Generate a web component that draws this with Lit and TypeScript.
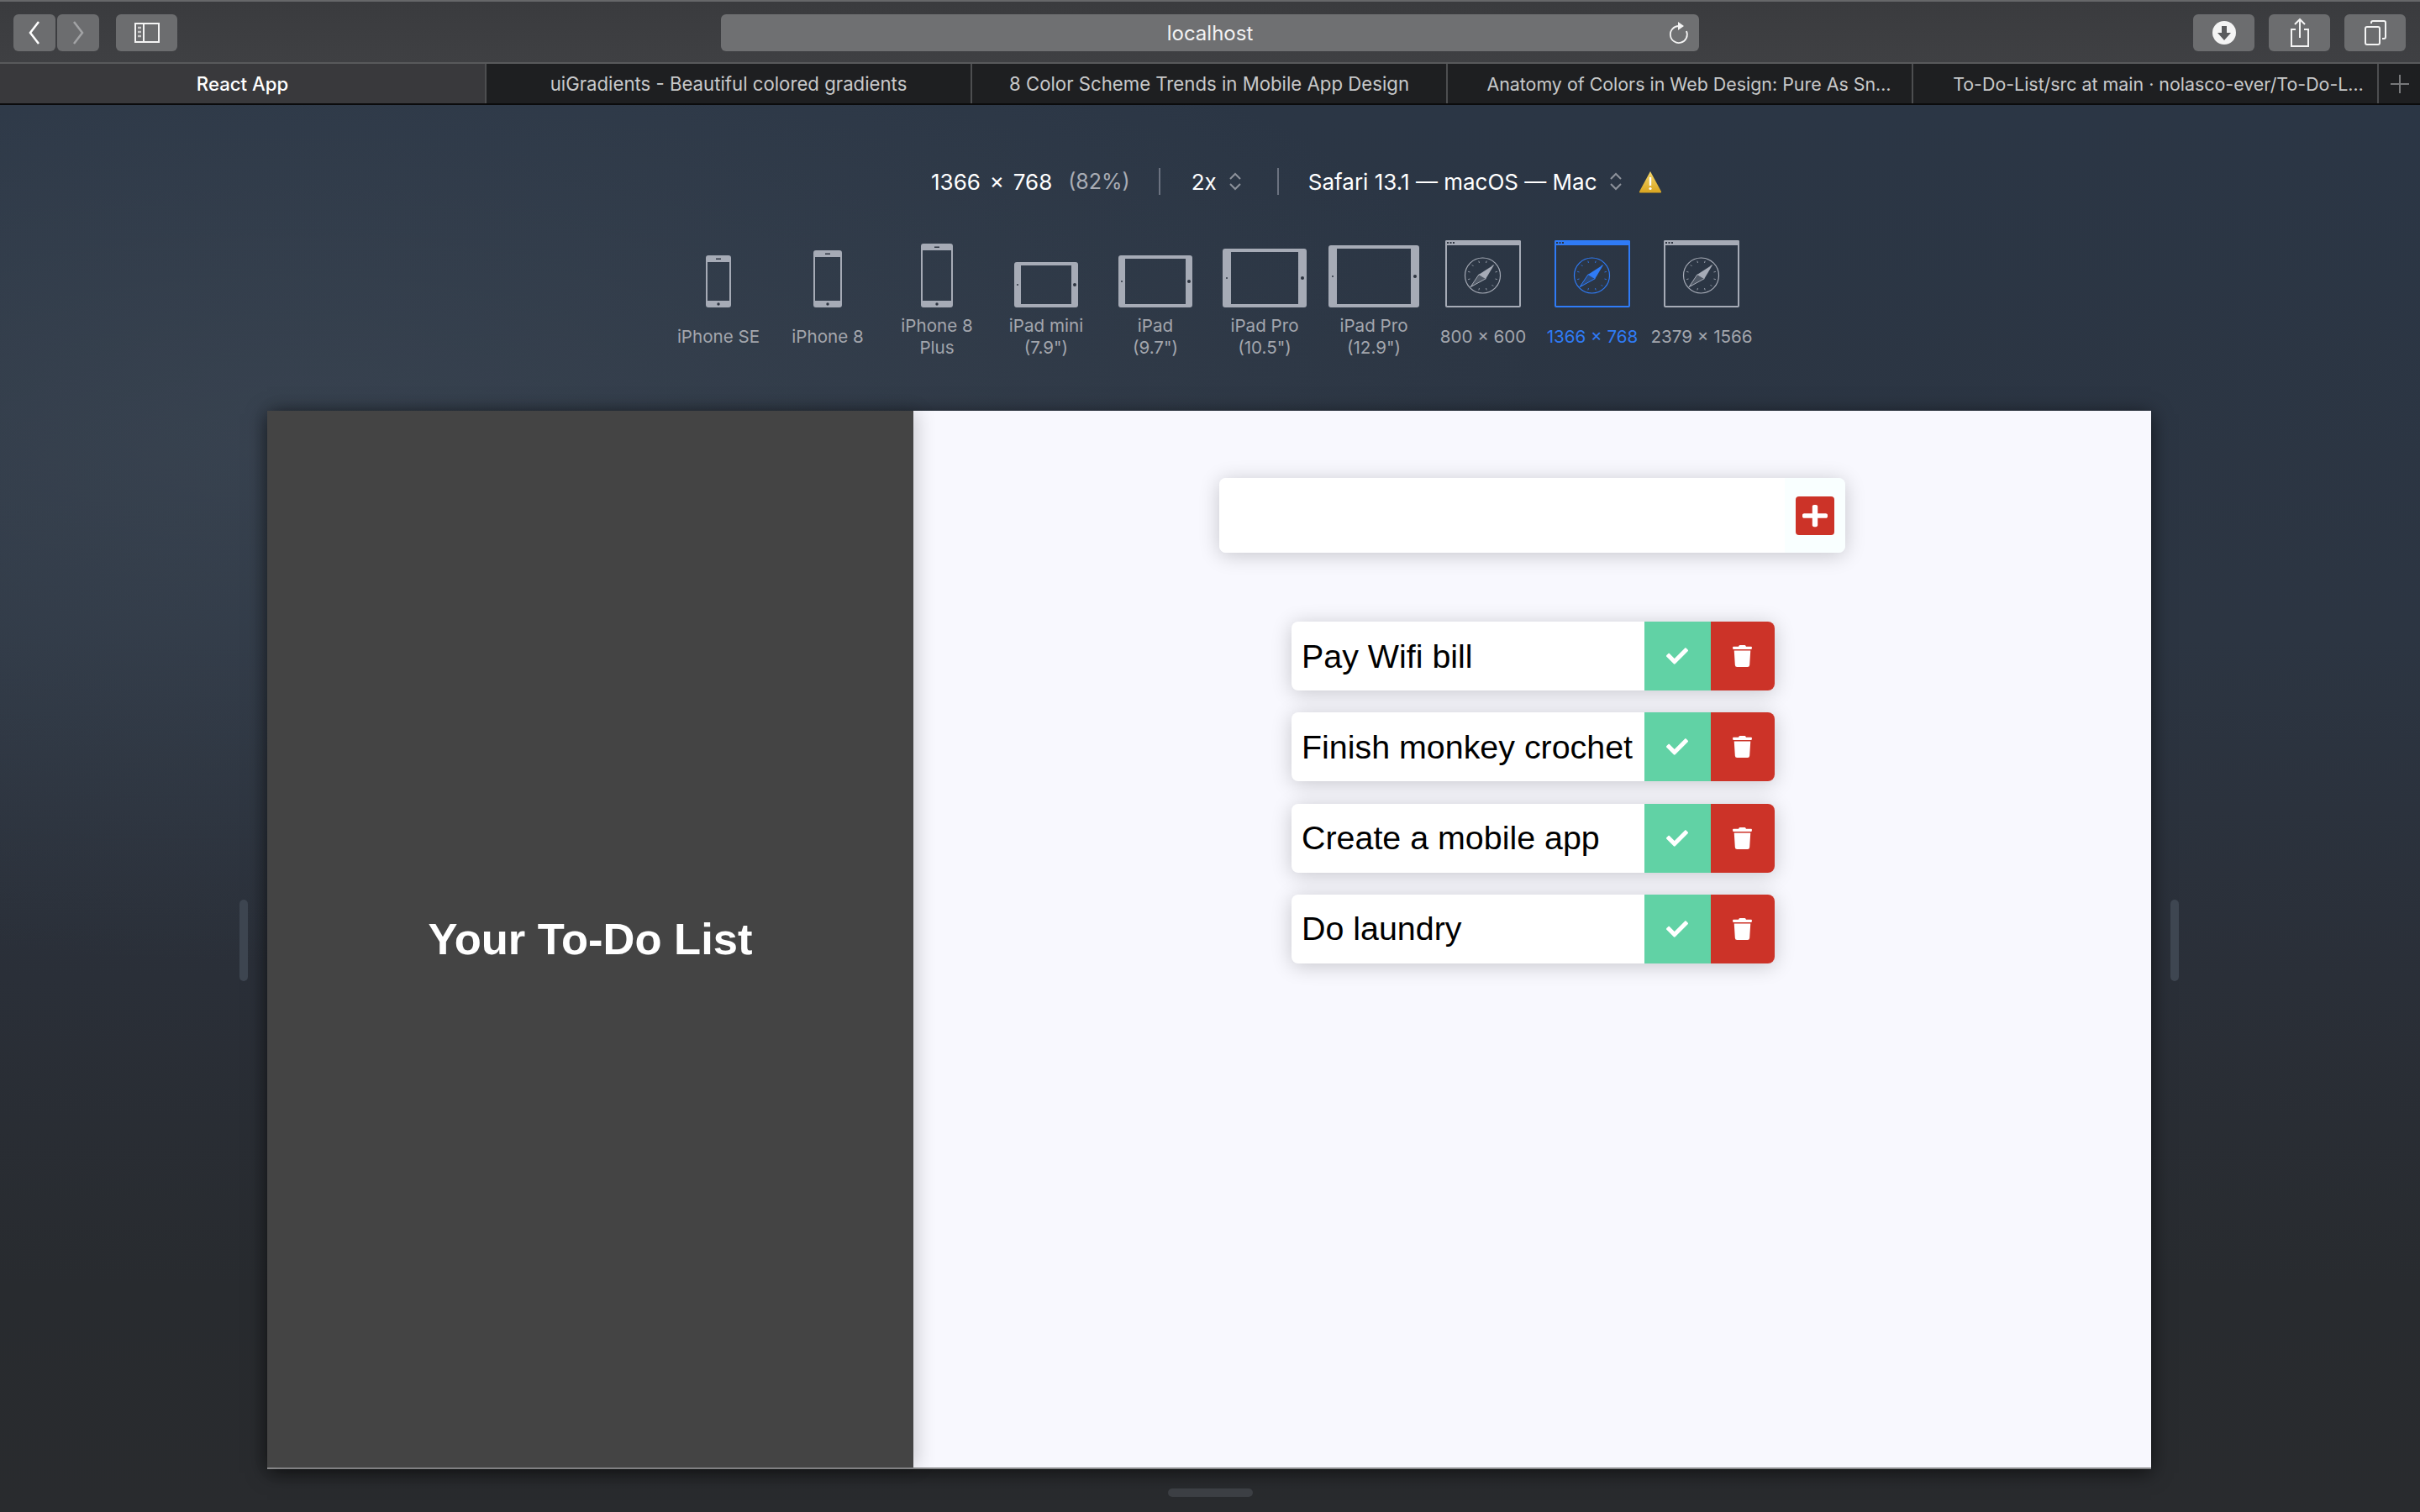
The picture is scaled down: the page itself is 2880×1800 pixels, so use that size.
import { LitElement, html, css, svg } from 'lit';
import { customElement } from 'lit/decorators.js';
import { classMap } from 'lit/directives/class-map.js';

const TABS = [
  { title: 'React App', active: true },
  { title: 'uiGradients - Beautiful colored gradients' },
  { title: '8 Color Scheme Trends in Mobile App Design' },
  { title: 'Anatomy of Colors in Web Design: Pure As Sn…', narrow: true, nudge: true },
  { title: 'To-Do-List/src at main · nolasco-ever/To-Do-L…', narrow: true, nudgeMore: true },
];

type Device = { kind: string; w: number; h: number; lines: string[]; active?: boolean; bx?: number };

const DEVICES: Device[] = [
  { kind: 'phone', w: 30, h: 62, lines: ['iPhone SE'] },
  { kind: 'phone', w: 34, h: 68, lines: ['iPhone 8'] },
  { kind: 'phone', w: 38, h: 76, lines: ['iPhone 8', 'Plus'] },
  { kind: 'tablet', w: 76, h: 54, bx: 8, lines: ['iPad mini', '(7.9")'] },
  { kind: 'tablet', w: 88, h: 62, bx: 8, lines: ['iPad', '(9.7")'] },
  { kind: 'tablet', w: 100, h: 70, bx: 10, lines: ['iPad Pro', '(10.5")'] },
  { kind: 'tablet', w: 108, h: 74, bx: 10, lines: ['iPad Pro', '(12.9")'] },
  { kind: 'window', w: 90, h: 80, lines: ['800 × 600'] },
  { kind: 'window', w: 90, h: 80, lines: ['1366 × 768'], active: true },
  { kind: 'window', w: 90, h: 80, lines: ['2379 × 1566'] },
];

const TODOS = ['Pay Wifi bill', 'Finish monkey crochet', 'Create a mobile app', 'Do laundry'];

const CHECK =
  'M173.898 439.404l-166.4-166.4c-9.997-9.997-9.997-26.206 0-36.204l36.203-36.204c9.997-9.998 26.207-9.998 36.204 0L192 312.69 432.095 72.596c9.997-9.997 26.207-9.997 36.204 0l36.203 36.204c9.997 9.997 9.997 26.206 0 36.204l-294.4 294.401c-9.998 9.997-26.207 9.997-36.204-.001z';
const TRASH =
  'M432 32H312l-9.4-18.7A24 24 0 0 0 281.1 0H166.8a23.72 23.72 0 0 0-21.4 13.3L136 32H16A16 16 0 0 0 0 48v32a16 16 0 0 0 16 16h416a16 16 0 0 0 16-16V48a16 16 0 0 0-16-16zM53.2 467a48 48 0 0 0 47.9 45h245.8a48 48 0 0 0 47.9-45L416 128H32z';
const PLUS =
  'M416 208H272V64c0-17.67-14.33-32-32-32h-32c-17.67 0-32 14.33-32 32v144H32c-17.67 0-32 14.33-32 32v32c0 17.67 14.33 32 32 32h144v144c0 17.67 14.33 32 32 32h32c17.67 0 32-14.33 32-32V304h144c17.67 0 32-14.33 32-32v-32c0-17.67-14.33-32-32-32z';

const DOT = '#2d3440';

// device frame with the screen cut out, so the page background shows through
function frame(w: number, h: number, x: number, y: number) {
  return `M3 0H${w - 3}Q${w} 0 ${w} 3V${h - 3}Q${w} ${h} ${w - 3} ${h}H3Q0 ${h} 0 ${h - 3}V3Q0 0 3 0Z` +
    `M${x} ${y}V${h - y}H${w - x}V${y}Z`;
}

function phoneIcon(d: Device) {
  const { w, h } = d;
  return svg`
    <path d=${frame(w, h, 2, 8)} fill="currentColor" fill-rule="evenodd"></path>
    <rect x=${w / 2 - 3} y="3.5" width="6" height="1.5" fill=${DOT}></rect>
    <circle cx=${w / 2} cy=${h - 4} r="1.7" fill=${DOT}></circle>`;
}

function tabletIcon(d: Device) {
  const { w, h } = d;
  const bx = d.bx ?? 8;
  return svg`
    <path d=${frame(w, h, bx, 4)} fill="currentColor" fill-rule="evenodd"></path>
    <circle cx=${bx / 2} cy=${h / 2} r="1" fill=${DOT}></circle>
    <circle cx=${w - bx / 2} cy=${h / 2} r="2" fill=${DOT}></circle>`;
}

function windowIcon() {
  const ticks = Array.from({ length: 12 }, (_, i) => {
    const a = (i * Math.PI) / 6 + Math.PI / 12;
    return svg`<line x1=${44.5 + Math.cos(a) * 15.5} y1=${42 + Math.sin(a) * 15.5}
      x2=${44.5 + Math.cos(a) * 18} y2=${42 + Math.sin(a) * 18}
      stroke="currentColor" stroke-width="1" opacity="0.85"></line>`;
  });
  return svg`
    <rect x="1" y="1" width="88" height="78" rx="1" fill="none" stroke="currentColor" stroke-width="2"></rect>
    <rect width="90" height="6" rx="1.5" fill="currentColor"></rect>
    <rect x="2" y="2" width="2" height="2" fill=${DOT}></rect>
    <rect x="5.5" y="2" width="2" height="2" fill=${DOT}></rect>
    <rect x="9" y="2" width="2" height="2" fill=${DOT}></rect>
    <circle cx="44.5" cy="42" r="21" fill="none" stroke="currentColor" stroke-width="1.2"></circle>
    ${ticks}
    <path d="M58.3 29 L40 40.7 L48.3 45.7 Z" fill="currentColor"></path>
    <path d="M30 55.7 L40 40.7 L48.3 45.7 Z" fill="currentColor" fill-opacity="0.3" stroke="currentColor" stroke-width="1"></path>`;
}

@customElement('app-root')
export class AppRoot extends LitElement {
  static styles = css`
    :host {
      display: block;
      width: 2880px;
      height: 1800px;
      overflow: hidden;
      font-family: Inter, 'Liberation Sans', sans-serif;
      color: #fff;
    }
    .toolbar {
      display: grid;
      grid-template-columns: 842px 1164px 1fr;
      align-items: center;
      height: 74px;
      box-sizing: border-box;
      padding: 2px 17px 0 16px;
      background: linear-gradient(#3a3b3e, #3f4043);
      border-top: 2px solid #666769;
    }
    .group {
      display: flex;
      align-items: center;
    }
    .tool {
      display: flex;
      align-items: center;
      justify-content: center;
      height: 44px;
      box-sizing: border-box;
      background: #6c6d6f;
      border-radius: 6px;
      color: #fff;
    }
    .nav {
      width: 50px;
      margin-right: 2px;
    }
    .side {
      width: 73px;
      margin-left: 18px;
    }
    .right {
      justify-content: flex-end;
      gap: 17px;
    }
    .right .tool {
      width: 73px;
    }
    .url {
      position: relative;
      display: flex;
      align-items: center;
      justify-content: center;
      height: 44px;
      background: #6f7072;
      border-radius: 6px;
      font-size: 24px;
      color: #f2f2f2;
    }
    .reload {
      position: absolute;
      right: 11px;
      top: 8px;
    }
    .tabs {
      display: grid;
      grid-template-columns: 579px 578px 566px 554px 554px 1fr;
      height: 51px;
      box-sizing: border-box;
      background: #1e1f21;
      border-top: 2px solid #58595b;
      border-bottom: 2px solid #0b0b0c;
    }
    .tab {
      display: flex;
      align-items: center;
      justify-content: center;
      font-size: 22.2px;
      color: #c8c9ca;
      white-space: nowrap;
      overflow: hidden;
      border-right: 2px solid #4d4e50;
    }
    .tab.narrow {
      font-size: 21.4px;
    }
    .tab.nudge {
      padding-left: 22px;
    }
    .tab.nudge-more {
      padding-left: 31px;
    }
    .tab.active {
      background: #39393c;
      color: #fff;
      font-weight: 500;
    }
    .new-tab {
      display: flex;
      align-items: center;
      justify-content: center;
    }
    .stage {
      display: flex;
      flex-direction: column;
      height: 1675px;
      background: radial-gradient(ellipse 1500px 620px at 12% 24%, rgba(84, 96, 108, 0.3), rgba(84, 96, 108, 0) 100%),
        linear-gradient(#2b3645 0%, #2c3542 38%, #2a2f38 62%, #282b2f 84%, #292b2e 100%);
    }
    .summary {
      display: flex;
      align-items: center;
      height: 32px;
      margin-top: 75px;
      padding-left: 1108px;
      font-size: 26px;
      word-spacing: 3.5px;
    }
    .zoom {
      margin-left: 19px;
      color: #a9adb5;
      font-size: 25px;
    }
    .sep {
      width: 2px;
      height: 32px;
      margin: 0 37px 0 34px;
      background: #6b7280;
    }
    .sep.after-scale {
      margin: 0 35px 0 43px;
    }
    .chevrons {
      margin-left: 15px;
    }
    .safari {
      word-spacing: 0;
    }
    .warn {
      margin-left: 20px;
    }
    .devices {
      display: flex;
      justify-content: center;
      margin-top: 54px;
    }
    .device {
      display: flex;
      flex-direction: column;
      align-items: center;
      width: 130px;
      color: #a6abb6;
    }
    .device.active {
      color: #2f7bf6;
    }
    .icon-box {
      display: flex;
      align-items: flex-end;
      height: 80px;
    }
    .labels {
      display: flex;
      flex-direction: column;
      justify-content: center;
      align-items: center;
      height: 52px;
      margin-top: 9px;
      font-size: 20.6px;
      line-height: 26px;
      white-space: nowrap;
      color: #a3a6ad;
    }
    .device.active .labels {
      color: #2f7bf6;
    }
    .view-row {
      display: flex;
      align-items: center;
      justify-content: center;
      gap: 23px;
      margin-top: 62px;
      padding-right: 2px;
    }
    .handle {
      width: 10px;
      height: 97px;
      border-radius: 5px;
      background: #3e4651;
    }
    .viewport {
      display: flex;
      width: 2242px;
      height: 1260px;
      box-sizing: border-box;
      border-bottom: 2px solid #8a8a8c;
      box-shadow: 0 4px 22px rgba(0, 0, 0, 0.6);
      background: #f8f8fe;
      color: #000;
      font-family: 'Liberation Sans', Arial, sans-serif;
    }
    .brand {
      display: flex;
      align-items: center;
      justify-content: center;
      width: 769px;
      flex: none;
      box-sizing: border-box;
      padding-bottom: 2px;
      background: #444444;
      box-shadow: 6px 0 20px rgba(0, 0, 0, 0.16);
      color: #fff;
      font-size: 52.5px;
      font-weight: 700;
    }
    .main {
      flex: 1;
      display: flex;
      flex-direction: column;
      align-items: center;
      padding-top: 80px;
    }
    .add-wrap {
      border-radius: 8px;
      box-shadow: 0 3px 24px rgba(0, 0, 0, 0.2);
    }
    .add-form {
      display: flex;
      width: 745px;
      height: 89px;
      border-radius: 8px;
      overflow: hidden;
    }
    .add-form input {
      flex: 1;
      min-width: 0;
      border: none;
      outline: none;
      background: #fff;
      font: inherit;
    }
    .add-cell {
      display: flex;
      align-items: center;
      justify-content: center;
      width: 72px;
      background: #f9ffff;
    }
    .add-btn {
      display: flex;
      align-items: center;
      justify-content: center;
      width: 46px;
      height: 46px;
      padding: 0;
      border: none;
      border-radius: 4px;
      background: #cc3328;
    }
    .list {
      display: flex;
      flex-direction: column;
      gap: 26.33px;
      margin: 82px 0 0 2px;
      padding: 0;
      list-style: none;
    }
    .todo {
      display: flex;
      width: 575px;
      height: 82px;
      border-radius: 8px;
      background: #fff;
      box-shadow: 0 3px 24px rgba(0, 0, 0, 0.2);
      overflow: hidden;
    }
    .todo-text {
      flex: 1;
      display: flex;
      align-items: center;
      padding-left: 12px;
      font-size: 39.4px;
      white-space: nowrap;
    }
    .act {
      display: flex;
      align-items: center;
      justify-content: center;
      padding: 0 1px 0 0;
      border: none;
      flex: none;
    }
    .done {
      width: 79px;
      background: #61d2a5;
    }
    .del {
      width: 76px;
      background: #cc3328;
    }
    svg {
      display: block;
    }
    .foot {
      width: 101px;
      height: 10px;
      margin: 23px auto 0;
      border-radius: 5px;
      background: #3c3f44;
    }
  `;

  private chevrons() {
    return html`<svg class="chevrons" width="14" height="22" viewBox="0 0 14 22" fill="none" stroke="#8d929b" stroke-width="2">
      <path d="M1 8 L7 2 L13 8"></path>
      <path d="M1 14 L7 20 L13 14"></path>
    </svg>`;
  }

  private deviceIcon(d: Device) {
    const body = d.kind === 'phone' ? phoneIcon(d) : d.kind === 'tablet' ? tabletIcon(d) : windowIcon();
    return html`<svg width=${d.w} height=${d.h} viewBox="0 0 ${d.w} ${d.h}">${body}</svg>`;
  }

  render() {
    return html`
      <div class="toolbar">
        <div class="group">
          <div class="tool nav">
            <svg width="16" height="28" viewBox="0 0 16 28" fill="none" stroke="#fff" stroke-width="2.5">
              <path d="M13 1 L3 14 L13 27"></path>
            </svg>
          </div>
          <div class="tool nav">
            <svg width="16" height="28" viewBox="0 0 16 28" fill="none" stroke="#a2a3a5" stroke-width="2.5">
              <path d="M3 1 L13 14 L3 27"></path>
            </svg>
          </div>
          <div class="tool side">
            <svg width="30" height="24" viewBox="0 0 30 24" fill="none" stroke="#f4f4f4" stroke-width="2">
              <rect x="1" y="1" width="28" height="22"></rect>
              <line x1="11" y1="1" x2="11" y2="23"></line>
              <path d="M4 6 H8 M4 11 H8 M4 16 H8" stroke-width="2.5" stroke="#c8c8c8"></path>
            </svg>
          </div>
        </div>
        <div class="url">
          localhost
          <svg class="reload" width="26" height="28" viewBox="0 0 26 28" fill="none" stroke="#f4f4f4" stroke-width="1.8">
            <path d="M13 6 A10 10 0 1 0 22 12"></path>
            <path d="M12 1 L19 6 L12 11 Z" fill="#f4f4f4" stroke="none"></path>
          </svg>
        </div>
        <div class="group right">
          <div class="tool">
            <svg width="28" height="28" viewBox="0 0 28 28">
              <circle cx="14" cy="14" r="14" fill="#f4f4f4"></circle>
              <path d="M11 6 H17 V14 H22 L14 23 L6 14 H11 Z" fill="#5b5c5e"></path>
            </svg>
          </div>
          <div class="tool">
            <svg width="24" height="36" viewBox="0 0 24 36" fill="none" stroke="#f4f4f4" stroke-width="2">
              <path d="M7 14 H2 V34 H22 V14 H17"></path>
              <path d="M12 24 V2 M6 8 L12 2 L18 8"></path>
            </svg>
          </div>
          <div class="tool">
            <svg width="26" height="30" viewBox="0 0 26 30" fill="none" stroke="#f4f4f4" stroke-width="2">
              <rect x="1" y="8" width="17" height="21" rx="2"></rect>
              <path d="M8 4 V3 A2 2 0 0 1 10 1 H23 A2 2 0 0 1 25 3 V20 A2 2 0 0 1 23 22 H21"></path>
            </svg>
          </div>
        </div>
      </div>

      <div class="tabs">
        ${TABS.map(
          (t) => html`<div
            class=${classMap({
              tab: true,
              active: !!t.active,
              narrow: !!t.narrow,
              nudge: !!t.nudge,
              'nudge-more': !!t.nudgeMore,
            })}
          >
            ${t.title}
          </div>`
        )}
        <div class="new-tab">
          <svg width="24" height="24" viewBox="0 0 24 24" stroke="#77787a" stroke-width="2">
            <path d="M12 1 V23 M1 12 H23"></path>
          </svg>
        </div>
      </div>

      <div class="stage">
        <div class="summary">
          <span>1366 × 768</span>
          <span class="zoom">(82%)</span>
          <span class="sep"></span>
          <span>2x</span>
          ${this.chevrons()}
          <span class="sep after-scale"></span>
          <span class="safari">Safari 13.1 — macOS — Mac</span>
          ${this.chevrons()}
          <svg class="warn" width="28" height="27" viewBox="0 0 28 27">
            <defs>
              <linearGradient id="warn-fill" x1="0" y1="0" x2="0" y2="1">
                <stop offset="0" stop-color="#f5d76a"></stop>
                <stop offset="1" stop-color="#d9a520"></stop>
              </linearGradient>
            </defs>
            <path d="M14 1 L27 25 Q27.5 26.5 26 26.5 H2 Q0.5 26.5 1 25 Z" fill="url(#warn-fill)"></path>
            <rect x="12.8" y="8" width="2.4" height="10" fill="#fff"></rect>
            <circle cx="14" cy="21.5" r="1.6" fill="#fff"></circle>
          </svg>
        </div>

        <div class="devices">
          ${DEVICES.map(
            (d) => html`
              <div class=${classMap({ device: true, active: !!d.active })}>
                <div class="icon-box">${this.deviceIcon(d)}</div>
                <div class="labels">${d.lines.map((l) => html`<span>${l}</span>`)}</div>
              </div>
            `
          )}
        </div>

        <div class="view-row">
          <div class="handle"></div>
          <div class="viewport">
            <div class="brand">Your To-Do List</div>
            <div class="main">
              <div class="add-wrap">
                <form class="add-form">
                  <input type="text" aria-label="New to-do" />
                  <div class="add-cell">
                    <button class="add-btn" type="button" aria-label="Add">
                      <svg width="30" height="30" viewBox="0 0 448 512" preserveAspectRatio="none" fill="#fff">
                        <path d=${PLUS}></path>
                      </svg>
                    </button>
                  </div>
                </form>
              </div>
              <ul class="list">
                ${TODOS.map(
                  (t) => html`
                    <li class="todo">
                      <span class="todo-text">${t}</span>
                      <button class="act done" type="button" aria-label="Done">
                        <svg width="26" height="26" viewBox="0 0 512 512" fill="#fff"><path d=${CHECK}></path></svg>
                      </button>
                      <button class="act del" type="button" aria-label="Delete">
                        <svg width="23" height="26" viewBox="0 0 448 512" fill="#fff"><path d=${TRASH}></path></svg>
                      </button>
                    </li>
                  `
                )}
              </ul>
            </div>
          </div>
          <div class="handle"></div>
        </div>
        <div class="foot"></div>
      </div>
    `;
  }
}
